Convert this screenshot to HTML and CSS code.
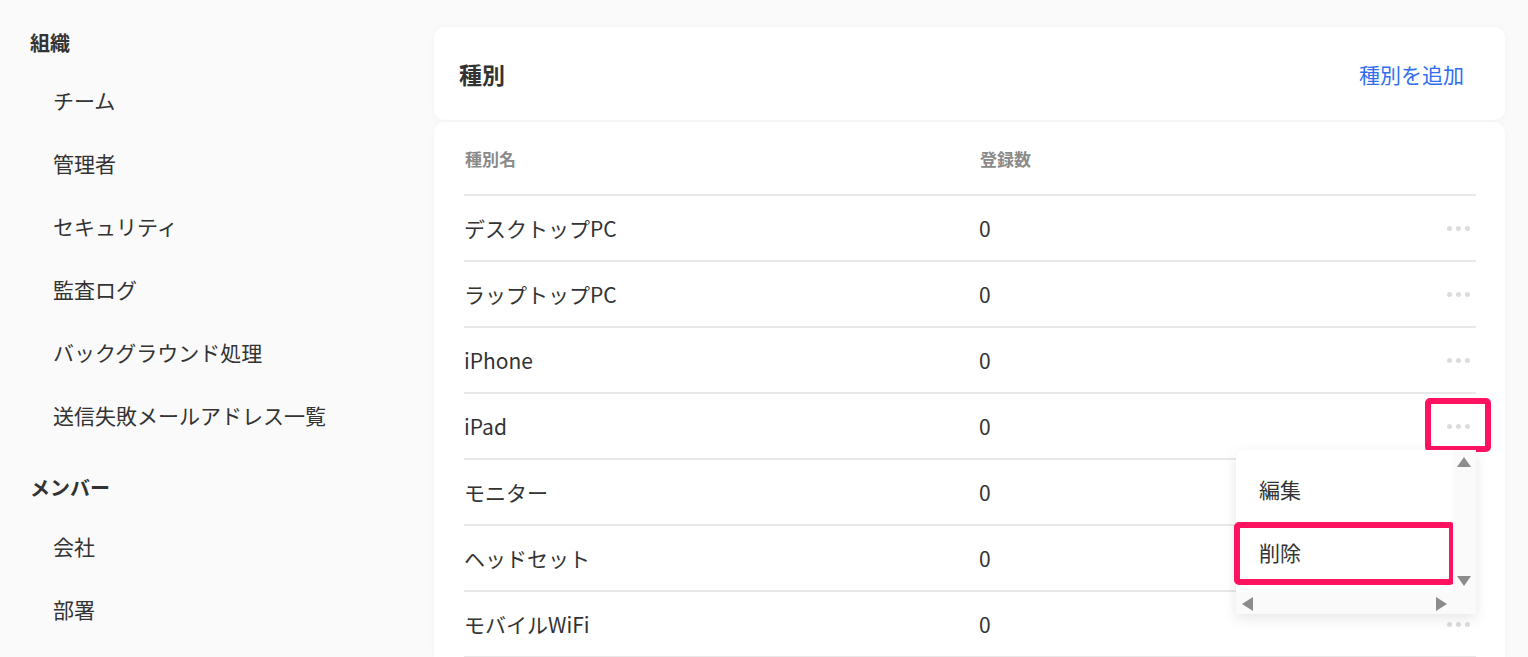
FILE: index.html
```html
<!DOCTYPE html>
<html lang="ja">
<head>
<meta charset="UTF-8">
<meta name="viewport" content="width=device-width, initial-scale=1.0">
<title>種別</title>
<link rel="stylesheet" href="styles.css">
</head>
<body>

<nav class="sidebar">
    <h3>組織</h3>
    <a class="nav-item">チーム</a>
    <a class="nav-item">管理者</a>
    <a class="nav-item">セキュリティ</a>
    <a class="nav-item">監査ログ</a>
    <a class="nav-item">バックグラウンド処理</a>
    <a class="nav-item">送信失敗メールアドレス一覧</a>

    <h3 class="group">メンバー</h3>
    <a class="nav-item">会社</a>
    <a class="nav-item">部署</a>
</nav>

<main class="content">
    <div class="card head">
        <h2>種別</h2>
        <a class="add-link">種別を追加</a>
    </div>

    <div class="card list">
        <div class="row th">
            <div class="c-name">種別名</div>
            <div class="c-count">登録数</div>
            <div class="c-act"></div>
        </div>

        <div class="row">
            <div class="c-name">デスクトップPC</div>
            <div class="c-count">0</div>
            <div class="c-act"><span class="dots"><i></i><i></i><i></i></span></div>
        </div>
        <div class="row">
            <div class="c-name">ラップトップPC</div>
            <div class="c-count">0</div>
            <div class="c-act"><span class="dots"><i></i><i></i><i></i></span></div>
        </div>
        <div class="row">
            <div class="c-name">iPhone</div>
            <div class="c-count">0</div>
            <div class="c-act"><span class="dots"><i></i><i></i><i></i></span></div>
        </div>
        <div class="row">
            <div class="c-name">iPad</div>
            <div class="c-count">0</div>
            <div class="c-act">
                <span class="dots"><i></i><i></i><i></i></span>
                <span class="mark mark-dots"></span>

                <!-- 操作メニュー -->
                <div class="menu">
                    <div class="menu-body">
                        <div class="menu-items">
                            <div class="menu-item">編集</div>
                            <div class="menu-item">削除<span class="mark mark-item"></span></div>
                        </div>
                        <div class="vbar">
                            <span class="arr up"></span>
                            <span class="arr down"></span>
                        </div>
                    </div>
                    <div class="hbar">
                        <span class="arr left"></span>
                        <span class="arr right"></span>
                    </div>
                </div>
            </div>
        </div>
        <div class="row">
            <div class="c-name">モニター</div>
            <div class="c-count">0</div>
            <div class="c-act"><span class="dots"><i></i><i></i><i></i></span></div>
        </div>
        <div class="row">
            <div class="c-name">ヘッドセット</div>
            <div class="c-count">0</div>
            <div class="c-act"><span class="dots"><i></i><i></i><i></i></span></div>
        </div>
        <div class="row">
            <div class="c-name">モバイルWiFi</div>
            <div class="c-count">0</div>
            <div class="c-act"><span class="dots"><i></i><i></i><i></i></span></div>
        </div>
    </div>
</main>

</body>
</html>
```

FILE: styles.css
```css
body {
    font-family: "Noto Sans CJK JP", "Noto Sans", sans-serif;
    margin: 0;
    padding: 0;
    background: #fafafa;
    color: #333;
    display: flex;
    height: 657px;
    overflow: hidden;
}

/* サイドメニュー */
.sidebar {
    width: 404px;
    padding: 28px 0 0 30px;
    flex-shrink: 0;
}

.sidebar h3 {
    margin: 0 0 11px;
    font-size: 20px;
    line-height: 30px;
    font-weight: bold;
    color: #333;
}

.sidebar h3.group {
    margin: 26px 0 12px;
}

.nav-item {
    display: block;
    padding-left: 23px;
    height: 63px;
    line-height: 63px;
    font-size: 21px;
    color: #333;
    white-space: nowrap;
}

/* メイン */
.content {
    width: 1071px;
    padding-top: 27px;
    display: flex;
    flex-direction: column;
    gap: 2px;
}

.card {
    background: #fff;
    border-radius: 10px;
    box-shadow: 0 0 6px rgba(0,0,0,0.03);
    flex-shrink: 0;
}

.card.head {
    height: 93px;
    display: flex;
    align-items: center;
    justify-content: space-between;
    padding: 0 41px 0 25px;
    box-sizing: border-box;
}

.card.head h2 {
    margin: 0;
    font-size: 23px;
    font-weight: bold;
    color: #333;
}

.add-link {
    color: #2f6ff0;
    font-size: 21px;
    cursor: pointer;
}

.card.list {
    padding: 0 29px 0 30px;
    border-radius: 10px 10px 0 0;
}

.row {
    display: flex;
    align-items: center;
    height: 64px;
    border-bottom: 2px solid #e8e8e8;
    font-size: 21px;
}

.row.th {
    height: 72px;
    font-size: 17px;
    font-weight: bold;
    color: #8a8a8a;
}

.row.th .c-name {
    padding-left: 1px;
}

.c-name {
    width: 515px;
}

.c-count {
    flex: 1;
}

.c-act {
    width: 60px;
    position: relative;
    display: flex;
    justify-content: flex-end;
    padding-right: 6px;
}

.dots {
    display: flex;
    gap: 4px;
    padding: 2px 0;
}

.dots i {
    width: 5px;
    height: 5px;
    border-radius: 50%;
    background: #dcdcdc;
}

/* 強調枠 */
.mark {
    position: absolute;
    border: 6px solid #ff1260;
    border-radius: 5px;
    pointer-events: none;
}

.mark-dots {
    right: -15px;
    top: -24px;
    width: 54px;
    height: 42px;
}

.mark-item {
    left: -2px;
    right: -2px;
    top: 1px;
    bottom: -1px;
}

/* ドロップダウン */
.menu {
    position: absolute;
    top: 28px;
    right: 0;
    width: 240px;
    height: 164px;
    background: #fff;
    border-radius: 8px 0 0 0;
    box-shadow: 0 4px 14px rgba(0,0,0,0.1);
    display: flex;
    flex-direction: column;
    z-index: 5;
}

.menu-body {
    display: flex;
    flex: 1;
}

.menu-items {
    flex: 1;
    padding: 8px 0;
}

.menu-item {
    position: relative;
    height: 63px;
    line-height: 63px;
    padding-left: 23px;
    font-size: 21px;
    font-weight: normal;
    color: #333;
}

.vbar {
    width: 23px;
    background: #fafafa;
    position: relative;
}

.hbar {
    height: 22px;
    background: #fafafa;
    position: relative;
}

.arr {
    position: absolute;
    width: 0;
    height: 0;
}

.arr.up {
    top: 7px;
    left: 4px;
    border-left: 7px solid transparent;
    border-right: 7px solid transparent;
    border-bottom: 10px solid #8c8c8c;
}

.arr.down {
    bottom: 6px;
    left: 4px;
    border-left: 7px solid transparent;
    border-right: 7px solid transparent;
    border-top: 10px solid #8c8c8c;
}

.arr.left {
    top: 5px;
    left: 6px;
    border-top: 7px solid transparent;
    border-bottom: 7px solid transparent;
    border-right: 11px solid #8c8c8c;
}

.arr.right {
    top: 5px;
    left: 200px;
    border-top: 7px solid transparent;
    border-bottom: 7px solid transparent;
    border-left: 11px solid #8c8c8c;
}
```
